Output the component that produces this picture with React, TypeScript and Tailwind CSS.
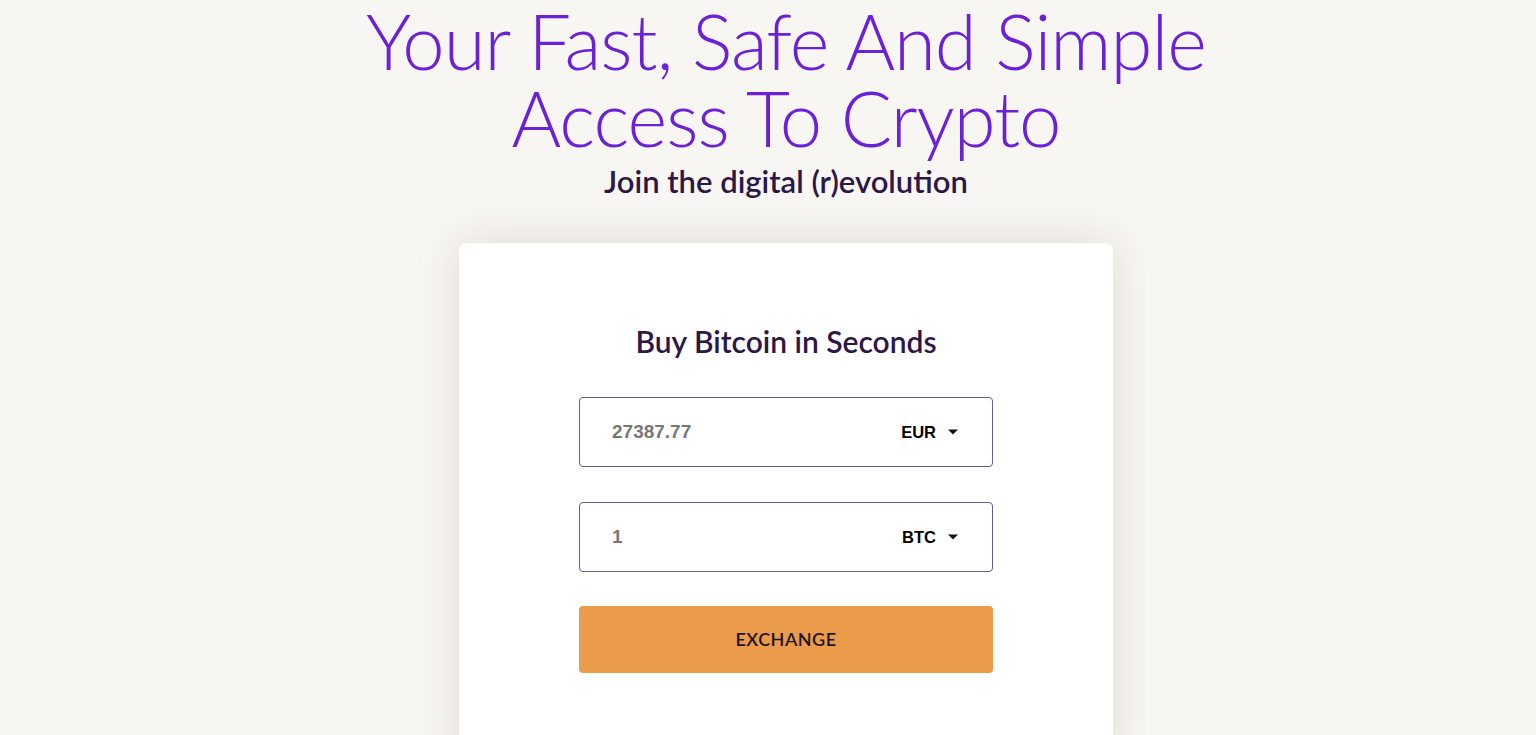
import React, { useState } from 'react';

const Caret: React.FC = () => (
  <svg width="10" height="6" viewBox="0 0 10 5" className="ml-[12px]">
    <path d="M0 0h10L5 5z" fill="#111" />
  </svg>
);

const AmountField: React.FC<{ value: string; currency: string; onChange: (v: string) => void }> = ({ value, currency, onChange }) => (
  <div className="flex h-[70px] items-center justify-between rounded-[4px] border border-[#6d5a8e] bg-white pl-8 pr-[34px]">
    <input
      value={value}
      onChange={(e) => onChange(e.target.value)}
      className="w-[220px] bg-transparent text-[19px] font-bold text-[#777] outline-none"
      style={{ fontFamily: '"Liberation Sans", Arial, sans-serif' }}
    />
    <button className="flex items-center text-[16.5px] font-bold text-black" style={{ fontFamily: '"Liberation Sans", Arial, sans-serif' }}>
      {currency}
      <Caret />
    </button>
  </div>
);

const App: React.FC = () => {
  const [eur, setEur] = useState('27387.77');
  const [btc, setBtc] = useState('1');

  return (
    <div className="min-h-screen overflow-hidden bg-[#f8f6f3] pl-[36px]" style={{ fontFamily: 'Lato, "Noto Sans", sans-serif' }}>
      <div className="flex flex-col items-center">
        <h1 className="mt-[2px] text-center text-[76px] font-light leading-[77px] tracking-[-1px] text-[#6b22d6]">
          Your Fast, Safe And Simple
          <br />
          Access To Crypto
        </h1>
        <p className="mt-[6px] text-[31px] font-semibold leading-[38px] text-[#2c1746]">Join the digital (r)evolution</p>

        <div className="mt-[43px] flex h-[520px] w-[654px] flex-col items-center rounded-[8px] bg-white pt-[80px] shadow-[0_0_45px_rgba(120,100,80,0.18)]">
          <h2 className="text-[30px] font-semibold leading-[36px] text-[#2c1746]">Buy Bitcoin in Seconds</h2>
          <div className="mt-[38px] flex w-[414px] flex-col">
            <AmountField value={eur} currency="EUR" onChange={setEur} />
            <div className="mt-[35px]">
              <AmountField value={btc} currency="BTC" onChange={setBtc} />
            </div>
            <button className="mt-[34px] h-[67px] rounded-[4px] bg-[#eb9c4b] text-[18px] font-semibold tracking-[0.5px] text-[#1f1429]">
              EXCHANGE
            </button>
          </div>
        </div>
      </div>
    </div>
  );
};

export default App;
